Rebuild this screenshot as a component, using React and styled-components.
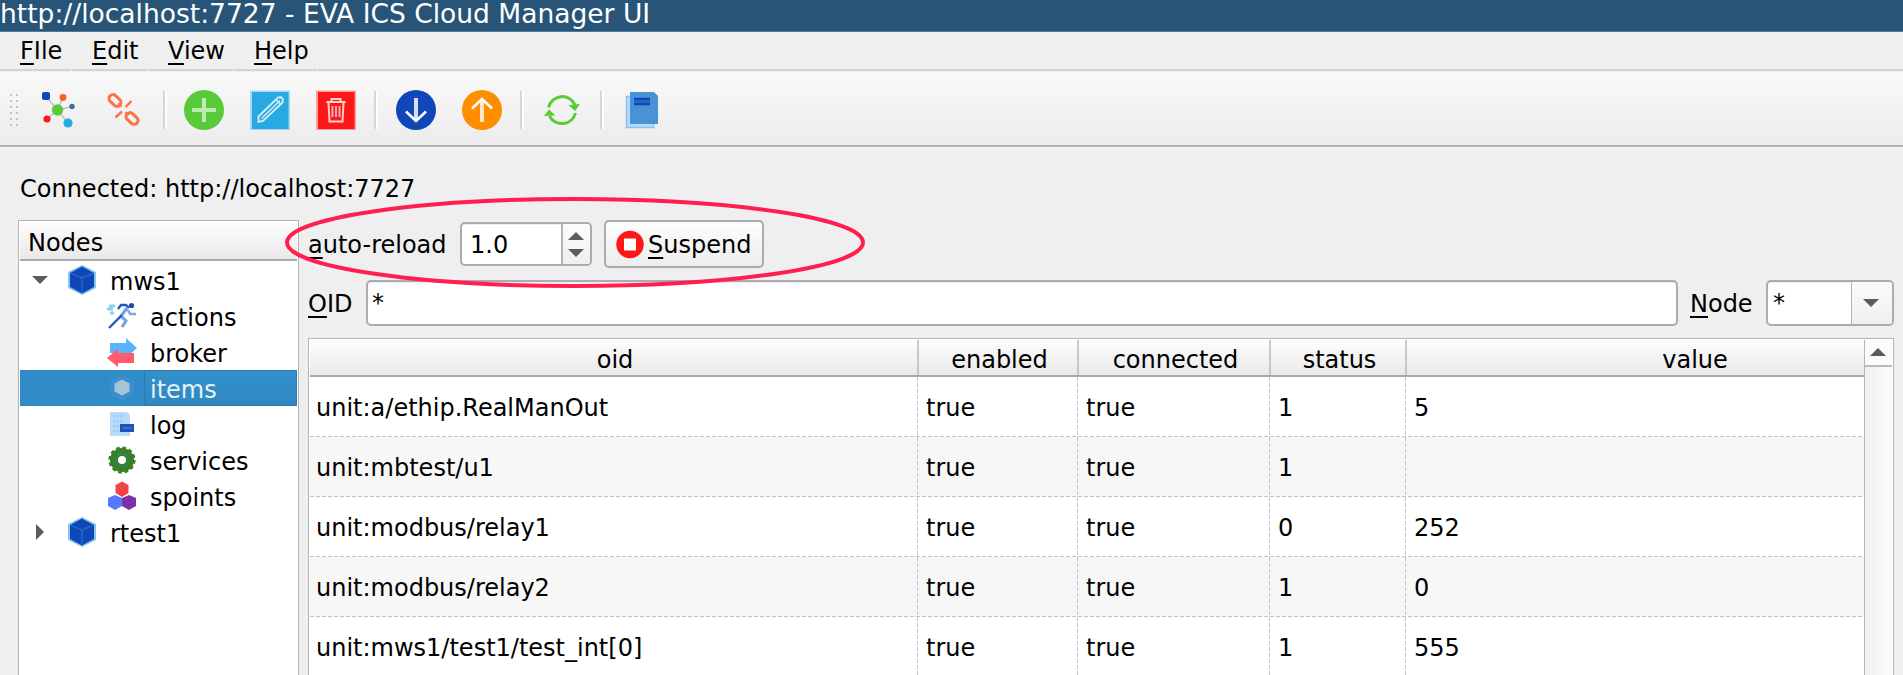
import React from 'react';
import styled, { createGlobalStyle, css } from 'styled-components';

const Global = createGlobalStyle`
  * { box-sizing: border-box; }
  body { margin: 0; overflow: hidden; background: #efefef; }
`;

const Window = styled.div`
  height: 675px;
  overflow: hidden;
  display: flex;
  flex-direction: column;
  position: relative;
  background: #efefef;
  color: #000;
  font: 24px/36px "DejaVu Sans", sans-serif;
  white-space: pre;
`;

const TitleBar = styled.header`
  flex: none;
  height: 32px;
  background: #285577;
  border-bottom: 1px solid #4c7899;
  color: #fff;
  font-size: 26.5px;
  line-height: 28px;
`;

const MenuBar = styled.nav`
  flex: none;
  display: flex;
  height: 40px;
  border-bottom: 1px solid #f0f0f0;
`;

const MenuItem = styled.div`
  width: ${p => p.$width}px;
  flex: ${p => (p.$width ? 'none' : '1')};
  margin-right: ${p => (p.$width ? 1 : 0)}px;
  padding: 1px 0 0 20px;
  border-bottom: 2px solid #d3d3d3;
`;

const Mnemonic = styled.span`
  text-decoration: underline 2px;
  text-underline-offset: 4px;
  text-decoration-skip-ink: none;
`;

const ToolBar = styled.div`
  flex: none;
  height: 75px;
  display: flex;
  align-items: center;
  padding: 2px 0 0 8px;
  background: linear-gradient(#f9f9f9, #ececec);
  border-bottom: 2px solid #b2b2b2;
`;

const Grip = styled.svg`
  width: 14px;
  height: 36px;
  margin-right: 3px;
`;

const Tool = styled.button`
  width: 66px;
  height: 60px;
  display: flex;
  align-items: center;
  justify-content: center;
  padding: 0;
  border: 0;
  background: none;
  svg { width: 42px; height: 42px; display: block; }
`;

const ToolSeparator = styled.div`
  width: 4px;
  height: 38px;
  margin: 0 ${p => p.$after ?? 5}px 0 ${p => p.$before ?? 5}px;
  border-left: 2px solid #d6d6d6;
  border-right: 2px solid #fff;
`;

const Status = styled.div`
  flex: none;
  height: 73px;
  padding: 23px 0 0 20px;
  border-top: 1px solid #f8f8f8;
`;

const Body = styled.main`
  flex: 1;
  min-height: 0;
  display: flex;
  gap: 9px;
  padding: 0 9px 0 18px;
`;

const headerSurface = css`
  background: linear-gradient(#fdfdfd, #e9e9e9);
  border-bottom: 2px solid #a9a9a9;
`;

const Tree = styled.aside`
  width: 281px;
  flex: none;
  border: 1px solid #b5b5b5;
  border-bottom: 0;
  background: #fff;
  padding: 1px 1px 0;
`;

const TreeHeader = styled.div`
  ${headerSurface}
  height: 39px;
  padding: 3px 0 0 8px;
  margin-bottom: 1px;
`;

const TreeRow = styled.div`
  height: 36px;
  display: flex;
  align-items: center;
  padding-left: ${p => (p.$child ? 86 : 6)}px;
  color: ${p => (p.$selected ? '#e6f1f8' : '#000')};
  background: ${p => (p.$selected ? '#308cc6' : 'transparent')};
`;

const Expander = styled.svg`
  width: 28px;
  height: 28px;
  margin-right: 12px;
`;

const NodeIcon = styled.svg`
  width: 32px;
  height: 32px;
  flex: none;
  overflow: visible;
`;

const NodeLabel = styled.span`
  flex: 1;
  height: 36px;
  margin-left: 6px;
  padding: 2px 0 0 6px;
  line-height: 36px;
  ${p => p.$selected && css`
    border: 1px solid #2a7ab0;
    padding: 1px 0 0 5px;
    background: linear-gradient(#3390cc, #2e88c0);
  `}
`;

const Content = styled.section`
  flex: 1;
  min-width: 0;
  display: flex;
  flex-direction: column;
`;

const ReloadBar = styled.div`
  height: 48px;
  flex: none;
  display: flex;
  align-items: center;
`;

const FilterBar = styled.div`
  height: 46px;
  flex: none;
  display: flex;
  align-items: center;
  margin: 12px 0;
`;

const FieldLabel = styled.label`
  width: ${p => p.$width}px;
  flex: none;
  padding: 1px 0 0 ${p => p.$left ?? 0}px;
`;

const frame = css`
  border: 2px solid #ababab;
  border-radius: 5px;
  overflow: hidden;
`;

const SpinBox = styled.div`
  ${frame}
  width: 132px;
  height: 44px;
  margin-right: 12px;
  display: flex;
  background: #fff;
  box-shadow: inset 0 1px #ededed;
`;

const FieldText = styled.span`
  flex: 1;
  padding: 3px 0 0 ${p => p.$left ?? 4}px;
`;

const SideButton = styled.div`
  width: ${p => p.$width}px;
  display: flex;
  align-items: center;
  justify-content: center;
  padding-right: 2px;
  border-left: ${p => p.$line}px solid #b4b4b4;
  background: linear-gradient(#fcfcfc, #efefef);
`;

const SuspendButton = styled.button`
  ${frame}
  width: 160px;
  height: 48px;
  display: flex;
  align-items: center;
  padding: 1px 0 0 9px;
  gap: 3px;
  font: inherit;
  color: inherit;
  background: linear-gradient(#fdfdfd, #ededed);
`;

const TextField = styled.div`
  ${frame}
  flex: 1;
  height: 46px;
  display: flex;
  background: #fff;
  box-shadow: inset 0 1px #ededed;
`;

const Combo = styled(TextField)`
  flex: none;
  width: 128px;
`;

const TableFrame = styled.div`
  flex: 1;
  min-height: 0;
  display: flex;
  border: 1px solid #b5b5b5;
  border-bottom: 0;
  padding: 1px 1px 0;
  background: #fff;
`;

const Grid = styled.div`
  flex: 1;
`;

const columns = '609px 160px 192px 136px 1fr';

const HeaderRow = styled.div`
  ${headerSurface}
  height: 37px;
  display: grid;
  grid-template-columns: ${columns};
  text-align: center;
`;

const HeaderCell = styled.div`
  padding: 2px 0 0 ${p => (p.$last ? 119 : 3)}px;
  height: 35px;
  border-right: ${p => (p.$last ? 0 : 2)}px solid #c8c8c8;
`;

const Row = styled.div`
  height: 60px;
  display: grid;
  grid-template-columns: ${columns};
  line-height: 60px;
  background-color: ${p => (p.$alt ? '#f7f7f7' : '#fff')};
  background-image: repeating-linear-gradient(90deg, #c3c3c3 0 4px, transparent 4px 6px);
  background-size: 100% 1px;
  background-repeat: no-repeat;
  background-position: 0 59px;
`;

const Cell = styled.div`
  height: 60px;
  padding: 1px 0 0 ${p => (p.$first ? 6 : 7)}px;
  ${p => !p.$last && css`
    background: repeating-linear-gradient(#c3c3c3 0 4px, transparent 4px 6px) right 1px top 0 / 1px 100% no-repeat;
  `}
`;

const ScrollBar = styled.div`
  width: 28px;
  border-left: 1px solid #b5b5b5;
  background: linear-gradient(90deg, #f0f0f0, #fcfcfc);
`;

const ScrollUp = styled.div`
  height: 27px;
  display: flex;
  align-items: center;
  justify-content: center;
  padding: 0 2px 2px 0;
  border-bottom: 2px solid #b9b9b9;
  background: #fbfbfb;
`;

const Highlight = styled.svg`
  position: absolute;
  left: 280px;
  top: 190px;
  pointer-events: none;
`;

const Arrow = ({ up }) => (
  <svg width="16" height="8" viewBox="0 0 16 8">
    <path d={up ? 'M0 8L8 0L16 8Z' : 'M0 0H16L8 8Z'} fill="#5c5c5c" />
  </svg>
);

const SpinArrows = styled.div`
  display: flex;
  flex-direction: column;
  gap: 9px;
  svg { display: block; }
`;

const NetworkIcon = () => (
  <svg viewBox="0 0 42 42">
    <g stroke="#b9c6cd" strokeWidth="1.5"><path d="M20.500 21L9 7M20.500 21L26 8M20.500 21L35 17.500M20.500 21L10 30M20.500 21L31 34" /></g>
    <circle cx="20.500" cy="21" r="5.700" fill="#58cb3a" />
    <rect x="5" y="3" width="8" height="8" rx="2" fill="#1246b8" />
    <circle cx="26" cy="8.500" r="3.400" fill="#ff6026" />
    <circle cx="35" cy="17.500" r="2.700" fill="#397298" />
    <circle cx="10" cy="30" r="3.600" fill="#ff1717" />
    <circle cx="31" cy="34" r="4.600" fill="#29a9e2" />
  </svg>
);

const UnlinkIcon = () => (
  <svg viewBox="0 0 42 42" fill="none" stroke="#ff7148" strokeWidth="3">
    <rect x="-6.800" y="-3.900" width="13.600" height="7.800" rx="3.900" transform="translate(12 11.500) rotate(43)" />
    <rect x="-6.800" y="-3.900" width="13.600" height="7.800" rx="3.900" transform="translate(29 29.500) rotate(43)" />
    <path d="M15 14.500L18.500 17.500M22.500 23L26 26" strokeWidth="2" />
    <path d="M22.500 18L28.500 12M12.500 28.500L19 22.500" strokeWidth="2.400" />
  </svg>
);

const AddIcon = () => (
  <svg viewBox="0 0 42 42">
    <circle cx="21" cy="21" r="20" fill="#58cb3a" />
    <path d="M9 21H33M21 9V33" stroke="#bdebb1" strokeWidth="4" />
  </svg>
);

const EditIcon = () => (
  <svg viewBox="0 0 42 42">
    <rect x="1" y="1.500" width="40" height="39.500" fill="#a5d9f2" />
    <rect x="3" y="3" width="36.500" height="37" fill="#29a9e2" />
    <g fill="none" stroke="#d5effa" strokeWidth="1.800">
      <path d="M9.500 27.500L29 8.500L32 8L34 10.500L33.500 13.500L14 32L9.500 33Z" />
      <path d="M12.500 29.500L31 11.500M27 10.500L31.500 15" strokeWidth="1.300" />
    </g>
  </svg>
);

const DeleteIcon = () => (
  <svg viewBox="0 0 42 42">
    <rect x="1" y="1.500" width="40" height="39.500" fill="#ff9d9d" />
    <rect x="3" y="3" width="36.500" height="37" fill="#ff1717" />
    <path d="M13.500 14L14.500 32.500H27.500L28.500 14M11.500 13H30.500M16.500 12.500V10H25.500V12.500" fill="none" stroke="#ffd2d2" strokeWidth="2" />
    <path d="M17.500 17V28M21 17V28M24.500 17V28" stroke="#ffaaaa" strokeWidth="2" />
  </svg>
);

const DownIcon = () => (
  <svg viewBox="0 0 42 42">
    <circle cx="21" cy="21" r="20" fill="#1246b8" />
    <path d="M21 9V31" stroke="#d5def2" strokeWidth="4" />
    <path d="M11 22.500L21 32L31 22.500" fill="none" stroke="#fff" strokeWidth="2.600" />
  </svg>
);

const UpIcon = () => (
  <svg viewBox="0 0 42 42">
    <circle cx="21" cy="21" r="20" fill="#ff8d00" />
    <path d="M21 33V11" stroke="#ffe5c4" strokeWidth="4" />
    <path d="M11 19.500L21 10L31 19.500" fill="none" stroke="#fff" strokeWidth="2.600" />
  </svg>
);

const RefreshIcon = () => (
  <svg viewBox="0 0 42 42">
    <g fill="none" stroke="#58cb3a" strokeWidth="3">
      <path d="M7.500 18.500A14 14 0 0 1 34 16" />
      <path d="M34.500 24A14 14 0 0 1 8.500 27" />
    </g>
    <path d="M27.500 16L39 15L34 22ZM3 27L14.500 26.500L8 20.500Z" fill="#58cb3a" />
  </svg>
);

const BookIcon = () => (
  <svg viewBox="0 0 42 42">
    <rect x="5.500" y="7.500" width="27" height="31" fill="#b3dbff" stroke="#8fc0f2" strokeWidth="1.500" />
    <path d="M9 3H33L37 7V35H9Z" fill="#4793d6" />
    <path d="M13 10H29M13 15H29" stroke="#1246b8" strokeWidth="2.500" />
    <path d="M13 12.500H29" stroke="#2462c2" strokeWidth="2.500" />
  </svg>
);

const CubeIcon = () => (
  <NodeIcon viewBox="0 0 32 32">
    <path d="M16 1L30 8V24L16 31L2 24V8Z" fill="#82c9ee" />
    <path d="M16 2.500L28 9V23L16 29.500L4 23V9Z" fill="#1246b8" />
    <path d="M5 9.500L16 14L27 9.500M16 14V28" fill="none" stroke="#176bc9" strokeWidth="1.600" />
  </NodeIcon>
);

const ActionsIcon = () => (
  <NodeIcon viewBox="0 0 32 32" fill="none">
    <path d="M3 6H9M1 9H7M4 13H8" stroke="#8ad3ee" strokeWidth="3" />
    <circle cx="25.500" cy="5.500" r="2.600" fill="#1c49b8" />
    <path d="M12 9L15 5H20L23 8" stroke="#2857be" strokeWidth="2.400" />
    <path d="M21 8L15 16L20 21L16 27" stroke="#66a6df" strokeWidth="3" />
    <path d="M22 10L24 14H30" stroke="#75ade0" strokeWidth="2.600" />
    <path d="M16 15L3 28" stroke="#2857be" strokeWidth="2.400" />
  </NodeIcon>
);

const BrokerIcon = () => (
  <NodeIcon viewBox="0 0 32 32">
    <path d="M4 7H20V2L31 12L20 22V17H4Z" fill="#57b4ff" />
    <path d="M28 17H12V12.500L1 22L12 31V27H28Z" fill="#ff5c6c" />
  </NodeIcon>
);

const ItemsIcon = () => (
  <NodeIcon viewBox="0 0 32 32">
    <path d="M16 3L28 9V22L16 28L4 22V9Z" fill="#3b8fd0" />
    <path d="M16 7.500L23.500 11.500V19.500L16 23.500L8.500 19.500V11.500Z" fill="#a5c5d6" />
  </NodeIcon>
);

const LogIcon = () => (
  <NodeIcon viewBox="0 0 32 32">
    <path d="M4 4H21L24 7V28H4Z" fill="#b5dcfc" />
    <path d="M7 8H18M7 13H18M7 18H13M7 23H13" stroke="#a3bfe0" strokeWidth="1.600" strokeDasharray="2 1.500" />
    <rect x="14" y="16" width="14" height="8" fill="#1f51bb" />
    <path d="M17 20H26" stroke="#4775cc" strokeWidth="1.500" />
  </NodeIcon>
);

const ServicesIcon = () => (
  <NodeIcon viewBox="0 0 32 32" fill="none">
    <circle cx="16" cy="16" r="12" stroke="#388024" strokeWidth="3.200" strokeDasharray="3.600 2.683" />
    <circle cx="16" cy="16" r="8" stroke="#388024" strokeWidth="8" />
    <circle cx="16" cy="16" r="6.500" stroke="#2f8562" strokeWidth="1.600" />
  </NodeIcon>
);

const SpointsIcon = () => (
  <NodeIcon viewBox="0 0 32 32">
    <path d="M9 15L16 18V26L9 30L2 26V18Z" fill="#5479ff" />
    <path d="M23 15L30 18V26L23 30L16 26V18Z" fill="#7c31a9" />
    <path d="M16 1.500L22.500 5V13L16 17L9.500 13V5Z" fill="#f24444" />
  </NodeIcon>
);

const StopIcon = () => (
  <svg width="30" height="30" viewBox="0 0 30 30">
    <circle cx="15" cy="14.500" r="13.700" fill="#ff1717" />
    <rect x="9" y="8.500" width="12" height="12" fill="#fff" />
  </svg>
);

const children = [
  ['actions', ActionsIcon],
  ['broker', BrokerIcon],
  ['items', ItemsIcon],
  ['log', LogIcon],
  ['services', ServicesIcon],
  ['spoints', SpointsIcon],
];

const rows = [
  ['unit:a/ethip.RealManOut', 'true', 'true', '1', '5'],
  ['unit:mbtest/u1', 'true', 'true', '1', ''],
  ['unit:modbus/relay1', 'true', 'true', '0', '252'],
  ['unit:modbus/relay2', 'true', 'true', '1', '0'],
  ['unit:mws1/test1/test_int[0]', 'true', 'true', '1', '555'],
];

const menus = [['FIle', 71], ['Edit', 75], ['View', 85], ['Help', 83]];

export default function App() {
  return (
    <Window>
      <Global />
      <TitleBar>http://localhost:7727 - EVA ICS Cloud Manager UI</TitleBar>
      <MenuBar>
        {menus.map(([name, width]) => (
          <MenuItem key={name} $width={width}>
            <Mnemonic>{name[0]}</Mnemonic>{name.slice(1)}
          </MenuItem>
        ))}
        <MenuItem />
      </MenuBar>
      <ToolBar>
        <Grip viewBox="0 0 14 36">
          {[0, 6, 12, 18, 24, 30].map(y => (
            <g key={y} fill="#c4c4c4">
              <rect x="2" y={y + 2} width="2" height="2" />
              <rect x="8" y={y + 2} width="2" height="2" />
            </g>
          ))}
        </Grip>
        <Tool><NetworkIcon /></Tool>
        <Tool><UnlinkIcon /></Tool>
        <ToolSeparator $before={6} $after={4} />
        <Tool><AddIcon /></Tool>
        <Tool><EditIcon /></Tool>
        <Tool><DeleteIcon /></Tool>
        <ToolSeparator />
        <Tool><DownIcon /></Tool>
        <Tool><UpIcon /></Tool>
        <ToolSeparator />
        <Tool><RefreshIcon /></Tool>
        <ToolSeparator />
        <Tool><BookIcon /></Tool>
      </ToolBar>
      <Status>Connected: http://localhost:7727</Status>
      <Body>
        <Tree>
          <TreeHeader>Nodes</TreeHeader>
          <TreeRow>
            <Expander viewBox="0 0 28 28"><path d="M6 10H22L14 18Z" fill="#5c5c5c" /></Expander>
            <CubeIcon />
            <NodeLabel>mws1</NodeLabel>
          </TreeRow>
          {children.map(([name, Icon]) => (
            <TreeRow key={name} $child $selected={name === 'items'}>
              <Icon />
              <NodeLabel $selected={name === 'items'}>{name}</NodeLabel>
            </TreeRow>
          ))}
          <TreeRow>
            <Expander viewBox="0 0 28 28"><path d="M10 6V22L18 14Z" fill="#5c5c5c" /></Expander>
            <CubeIcon />
            <NodeLabel>rtest1</NodeLabel>
          </TreeRow>
        </Tree>
        <Content>
          <ReloadBar>
            <FieldLabel $width={152}><Mnemonic>a</Mnemonic>uto-reload</FieldLabel>
            <SpinBox>
              <FieldText $left={8}>1.0</FieldText>
              <SideButton $width={29} $line={2}>
                <SpinArrows><Arrow up /><Arrow /></SpinArrows>
              </SideButton>
            </SpinBox>
            <SuspendButton>
              <StopIcon />
              <span><Mnemonic>S</Mnemonic>uspend</span>
            </SuspendButton>
          </ReloadBar>
          <FilterBar>
            <FieldLabel $width={58}><Mnemonic>O</Mnemonic>ID</FieldLabel>
            <TextField><FieldText>*</FieldText></TextField>
            <FieldLabel $width={88} $left={12}><Mnemonic>N</Mnemonic>ode</FieldLabel>
            <Combo>
              <FieldText $left={5}>*</FieldText>
              <SideButton $width={41} $line={1}><Arrow /></SideButton>
            </Combo>
          </FilterBar>
          <TableFrame>
            <Grid>
              <HeaderRow>
                {['oid', 'enabled', 'connected', 'status', 'value'].map((name, i) => (
                  <HeaderCell key={name} $last={i === 4}>{name}</HeaderCell>
                ))}
              </HeaderRow>
              {rows.map((row, r) => (
                <Row key={row[0]} $alt={r % 2 === 1}>
                  {row.map((value, i) => <Cell key={i} $first={i === 0} $last={i === 4}>{value}</Cell>)}
                </Row>
              ))}
            </Grid>
            <ScrollBar><ScrollUp><Arrow up /></ScrollUp></ScrollBar>
          </TableFrame>
        </Content>
      </Body>
      <Highlight width="600" height="110" viewBox="0 0 600 110">
        <ellipse cx="295" cy="52.500" rx="288" ry="43.500" fill="none" stroke="#ff1e4e" strokeWidth="4" />
      </Highlight>
    </Window>
  );
}
